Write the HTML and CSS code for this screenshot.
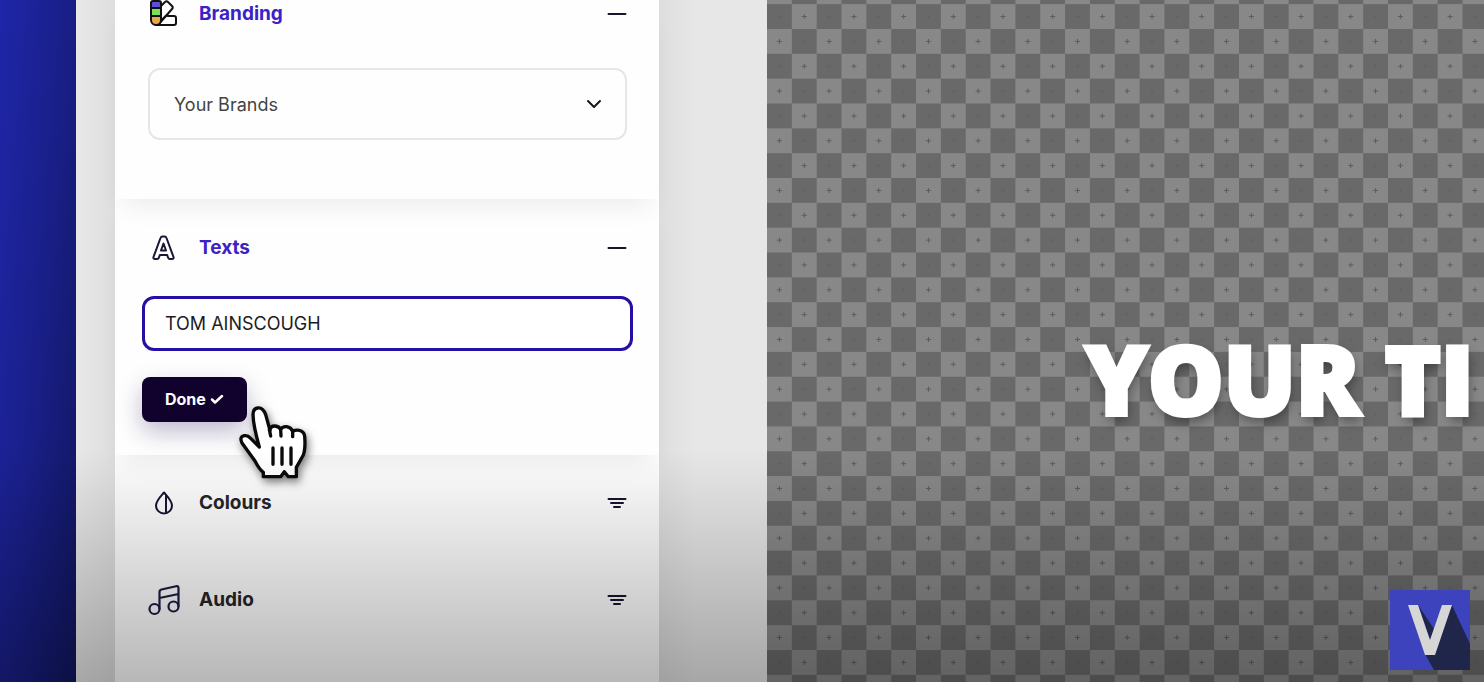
FILE: index.html
```html
<!DOCTYPE html>
<html lang="en">
<head>
<meta charset="utf-8">
<title>Title editor</title>
<link rel="stylesheet" href="styles.css">
</head>
<body>
<div class="app">
  <div class="rail"></div>
  <main class="workspace">
    <aside class="panel">
      <section class="section section-first">
        <header class="heading heading-open">
          <svg class="icon" viewBox="0 0 32 32" fill="none" stroke="#111" stroke-width="2" stroke-linejoin="round">
            <path d="M12 9l5-5q1.500-1.500 3 0l4 4q1.500 1.500 0 3L10 27"/>
            <path d="M20 18h6q2 0 2 2v5q0 2-2 2H8L19 17z"/>
            <path d="M3 10V5q0-2 2-2h6q2 0 2 2v5z" fill="#5b4fd6"/>
            <path d="M3 10h10v8H3z" fill="#7ae05a"/>
            <path d="M3 18h10v4a5 5 0 0 1-10 0z" fill="#e8a850"/>
          </svg>
          <h2>Branding</h2>
          <button class="toggle" aria-label="Collapse branding"><svg viewBox="0 0 20 20"><path d="M1.500 10h17"/></svg></button>
        </header>
        <div class="select-wrap">
          <select class="select" aria-label="Your Brands"><option>Your Brands</option></select>
          <svg class="chevron" viewBox="0 0 16 16"><path d="M2 5l6 6 6-6"/></svg>
        </div>
      </section>
      <section class="section section-texts">
        <header class="heading heading-open">
          <svg class="icon" viewBox="0 0 32 32" fill="none" stroke="#1b1533" stroke-width="2" stroke-linejoin="round">
            <path d="M12.500 6q.5-1.500 2-1.500h2q1.500 0 2 1.500l7 19q.5 2-1.500 2h-2q-1.500 0-2-1.500L19.200 23h-7.400l-.8 2.500q-.5 1.500-2 1.500H7q-2 0-1.500-2z"/>
            <path d="M15.500 11.500l-2.500 7h5z"/>
          </svg>
          <h2>Texts</h2>
          <button class="toggle" aria-label="Collapse texts"><svg viewBox="0 0 20 20"><path d="M1.500 10h17"/></svg></button>
        </header>
        <form class="text-form">
          <input class="text-input" type="text" value="TOM AINSCOUGH" aria-label="Title text">
          <div class="done-wrap">
            <button class="done" type="button">Done <svg viewBox="0 0 14 14"><path d="M2 7.500l3 3L12 4"/></svg></button>
            <svg class="pointer" viewBox="0 0 216 234" aria-hidden="true">
              <path d="M73 218V205Q62 198 48 171L9 117Q0 98 16 95Q26 93 35 103L61 129Q43 66 42 32Q42 14 56 12Q72 10 80 32L93 79Q94 66 107 66Q119 66 125 76Q130 67 143 68Q156 70 161 82Q170 77 181 79Q195 82 197 96Q200 134 193 153L172 190V218H148L136 203L125 218Z" fill="#fff" stroke="#0a0a0a" stroke-width="10" stroke-linejoin="round"/>
              <path d="M91 76L95 96M102 132v49M129 132v49M156 132v49M125 78l1 18M161 82v16" stroke="#0a0a0a" stroke-width="10" stroke-linecap="round"/>
            </svg>
          </div>
        </form>
      </section>
      <section class="section section-closed">
        <header class="heading">
          <svg class="icon" viewBox="0 0 32 32" fill="none" stroke="#1b1533" stroke-width="2" stroke-linejoin="round">
            <path d="M16 5.500C13 9 8 14 8 18.500a8 8 0 0 0 16 0C24 14 19 9 16 5.500zM18 8v18"/>
          </svg>
          <h2>Colours</h2>
          <button class="toggle" aria-label="Expand colours"><svg viewBox="0 0 20 20"><path d="M1.500 6h17M4 10h12M7 14h6"/></svg></button>
        </header>
        <header class="heading">
          <svg class="icon" viewBox="0 0 32 32" fill="none" stroke="#1b1b45" stroke-width="2.200" stroke-linejoin="round">
            <circle cx="6.500" cy="25" r="5"/><circle cx="25.500" cy="22.500" r="5"/>
            <path d="M11.500 25V8q0-2 2-2.500L28 2.200q2.500-.5 2.500 2v18.300M11.500 14l19-4"/>
          </svg>
          <h2>Audio</h2>
          <button class="toggle" aria-label="Expand audio"><svg viewBox="0 0 20 20"><path d="M1.500 6h17M4 10h12M7 14h6"/></svg></button>
        </header>
      </section>
    </aside>
    <div class="stage">
      <svg class="checker" aria-hidden="true">
        <defs>
          <pattern id="tiles" width="48" height="48" y="4" patternUnits="userSpaceOnUse" patternTransform="scale(1.035)">
            <rect width="48" height="48" fill="#888"/>
            <path d="M0 0h24v24H0zM24 24h24v24H24z" fill="#696969"/>
            <path d="M36 9.500v5M33.500 12h5M12 33.500v5M9.500 36h5" stroke="#5c5c5c"/>
            <path d="M12 10v4M10 12h4M36 34v4M34 36h4" stroke="#626262"/>
          </pattern>
        </defs>
        <rect width="100%" height="100%" fill="url(#tiles)"/>
      </svg>
      <p class="title">YOUR TI</p>
    </div>
  </main>
  <div class="shade"></div>
  <svg class="logo" viewBox="0 0 80 80" role="img" aria-label="V">
    <path d="M0 0h80v80H0z" fill="#3d42bd"/>
    <path d="M28 15l16 24-4 11zM62 15l18 39v26H44L35 64z" fill="#20254a"/>
    <path d="M18 15h10l12 35 12-35h10L45 65H35z" fill="#d6d6d6"/>
  </svg>
</div>
</body>
</html>
```
FILE: styles.css
```css
* { box-sizing: border-box; }

body {
  margin: 0;
  font-family: Inter, "Liberation Sans", sans-serif;
  color: #252528;
}

.app {
  position: relative;
  display: flex;
  min-height: 100vh;
  overflow: hidden;
}

.rail {
  flex: 0 0 76px;
  background: linear-gradient(95deg, #1f26a8, #191f88 50%, #11165e);
}

.workspace {
  flex: 1;
  min-width: 0;
  display: flex;
  padding-left: 39px;
  background: linear-gradient(90deg, #e8e8e8, #dedede 39px, #dedede 583px, #e7e7e7 620px);
}

.panel {
  flex: 0 0 544px;
  background: #fefefe;
}

.section {
  position: relative;
  background: #fefefe;
}

.section-first {
  z-index: 3;
  padding-bottom: 59px;
  box-shadow: 0 16px 24px -8px rgba(0, 0, 0, 0.07);
}

.section-texts {
  z-index: 2;
  padding: 35px 0 33px;
  box-shadow: 0 16px 24px -8px rgba(0, 0, 0, 0.07);
}

.section-closed {
  display: grid;
  gap: 69px;
  padding-top: 34px;
}

.heading {
  display: flex;
  align-items: center;
  height: 28px;
  padding: 0 32px 0 33px;
}

.heading h2 {
  flex: 1;
  margin: 0 0 0 19px;
  font-size: 19px;
  line-height: 28px;
  font-weight: 700;
}

.heading-open h2 { color: #3c22c4; }

.icon {
  width: 32px;
  height: 32px;
}

.toggle {
  display: flex;
  padding: 0;
  border: 0;
  background: none;
}

.toggle svg {
  width: 20px;
  height: 20px;
  fill: none;
  stroke: #17142c;
  stroke-width: 2;
  stroke-linecap: round;
}

.select-wrap {
  position: relative;
  margin: 40px 32px 0 33px;
}

.select {
  display: block;
  width: 100%;
  height: 72px;
  padding: 2px 24px 0;
  border: 2px solid #e6e6e6;
  border-radius: 12px;
  appearance: none;
  background: #fefefe;
  font: 400 18px/24px Inter, "Liberation Sans", sans-serif;
  color: #444;
}

.chevron {
  position: absolute;
  top: 28px;
  right: 25px;
  width: 16px;
  height: 16px;
  fill: none;
  stroke: #17171c;
  stroke-width: 2;
  stroke-linecap: round;
  stroke-linejoin: round;
  pointer-events: none;
}

.text-form { padding: 34px 26px 0 27px; }

.text-input {
  display: block;
  width: 100%;
  height: 55px;
  padding: 0 20px;
  border: 3px solid #2410a4;
  border-radius: 12px;
  outline: 0;
  background: #fff;
  font: 400 18px/24px Inter, "Liberation Sans", sans-serif;
  color: #1c1c1e;
}

.done-wrap {
  position: relative;
  display: inline-block;
  margin-top: 26px;
  vertical-align: top;
}

.done {
  display: flex;
  align-items: center;
  gap: 4px;
  height: 45px;
  padding: 0 23px 2px;
  border: 0;
  border-radius: 8px;
  background: #10022c;
  box-shadow: 0 10px 24px rgba(30, 10, 80, 0.28);
  font: 700 16px/20px Inter, "Liberation Sans", sans-serif;
  color: #fff;
}

.done svg {
  width: 14px;
  height: 14px;
  fill: none;
  stroke: #fff;
  stroke-width: 2.5;
  stroke-linecap: round;
  stroke-linejoin: round;
}

.pointer {
  position: absolute;
  top: 27px;
  left: 97px;
  width: 72px;
  height: 78px;
  filter: drop-shadow(2px 4px 4px rgba(0, 0, 0, 0.5));
}

.stage {
  position: relative;
  flex: 1;
  min-width: 0;
  margin-left: 108px;
  display: flex;
  align-items: center;
  overflow: hidden;
}

.checker {
  position: absolute;
  inset: 0;
  width: 100%;
  height: 100%;
}

.title {
  position: relative;
  margin: 74px 0 0 318px;
  font: 800 95px/100px "Open Sans", Inter, sans-serif;
  white-space: nowrap;
  color: #fff;
  -webkit-text-stroke: 4px #fff;
  text-shadow: 2px 6px 12px rgba(0, 0, 0, 0.4);
}

.shade {
  position: absolute;
  z-index: 4;
  inset: auto 0 0;
  height: 34%;
  background: linear-gradient(transparent, rgba(0, 0, 0, 0.28));
  pointer-events: none;
}

.logo {
  position: absolute;
  z-index: 5;
  right: 14px;
  bottom: 12px;
  width: 80px;
  height: 80px;
}
```
